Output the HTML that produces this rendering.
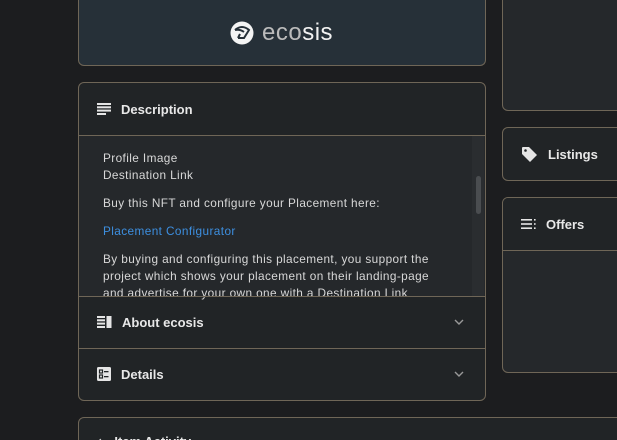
<!DOCTYPE html>
<html><head><style>
*{box-sizing:border-box;margin:0;padding:0}
html,body{width:617px;height:440px;overflow:hidden}
body{background:#1c1d1f;font-family:"Liberation Sans",sans-serif;color:#e5e5e5;position:relative}
.card{position:absolute;border:1px solid #6f6657;border-radius:6px;overflow:hidden;background:#212426}
.hdr{position:absolute;left:0;right:0;height:52px;display:flex;align-items:center;padding-left:18px;font-weight:bold;font-size:13px;color:#e8e8e8}
.hdr svg{margin-right:10px}
.sep{position:absolute;left:0;right:0;height:1px;background:#6f6657}
.txt{position:absolute;left:24px;font-size:11.8px;color:#d8d8d8;line-height:17px;letter-spacing:0.4px;white-space:nowrap}
.hdr svg.chev{position:absolute;right:21px;margin:0}
</style></head><body>
<div class="card" style="left:78px;top:-10px;width:408px;height:76px;background:#263038;border-top:none">
  <svg style="position:absolute;left:151px;top:31px" width="24" height="24" viewBox="0 0 24 24"><circle cx="12" cy="12" r="11.5" fill="#f4f4f4"/><path d="M5 9 Q12 3 19 9 L14 17 L8 17 M5 9 Q10 8 14 11 M8 17 L10 13" stroke="#263038" stroke-width="2" fill="none"/></svg>
  <div style="position:absolute;left:183px;top:29px;font-size:24px;color:#f2f2f2;letter-spacing:0.5px"><span style="color:#bbb">eco</span><span>sis</span></div>
</div>

<div class="card" style="left:78px;top:82px;width:408px;height:319px">
  <div class="hdr" style="top:0">
    <svg width="14" height="12" viewBox="0 0 14 12"><rect x="0" y="0" width="14" height="2" fill="#e5e5e5"/><rect x="0" y="3.3" width="14" height="2" fill="#e5e5e5"/><rect x="0" y="6.6" width="14" height="2" fill="#e5e5e5"/><rect x="0" y="10" width="9" height="2" fill="#e5e5e5"/></svg>Description</div>
  <div class="sep" style="top:52px"></div>
  <div style="position:absolute;top:53px;left:0;right:0;height:160px;background:#25282b">
    <div class="txt" style="top:14px">Profile Image<br>Destination Link</div>
    <div class="txt" style="top:59px">Buy this NFT and configure your Placement here:</div>
    <div class="txt" style="top:87px;color:#3d8fe0">Placement Configurator</div>
    <div class="txt" style="top:115px">By buying and configuring this placement, you support the<br>project which shows your placement on their landing-page<br>and advertise for your own one with a Destination Link</div>
    <div style="position:absolute;right:1px;top:0;width:12px;height:160px;background:#2a2d30"></div>
    <div style="position:absolute;right:4px;top:40px;width:5px;height:38px;border-radius:3px;background:#4a4d50"></div>
  </div>
  <div class="sep" style="top:213px"></div>
  <div class="hdr" style="top:213px">
    <svg width="15" height="12" viewBox="0 0 15 12"><rect x="0" y="0" width="8" height="2" fill="#e5e5e5"/><rect x="0" y="3.3" width="8" height="2" fill="#e5e5e5"/><rect x="0" y="6.6" width="8" height="2" fill="#e5e5e5"/><rect x="0" y="10" width="8" height="2" fill="#e5e5e5"/><rect x="9.5" y="0" width="5" height="12" fill="#e5e5e5"/></svg>About ecosis
    <svg class="chev" width="10" height="6" viewBox="0 0 10 6"><path d="M1 1 L5 5 L9 1" stroke="#999" stroke-width="1.4" fill="none"/></svg></div>
  <div class="sep" style="top:265px"></div>
  <div class="hdr" style="top:265px">
    <svg width="14" height="14" viewBox="0 0 14 14"><rect width="14" height="14" rx="1.5" fill="#e5e5e5"/><rect x="2.5" y="3" width="3" height="3" fill="none" stroke="#212426" stroke-width="1.2"/><rect x="2.5" y="8" width="3" height="3" fill="none" stroke="#212426" stroke-width="1.2"/><rect x="7" y="4" width="4.5" height="1.3" fill="#212426"/><rect x="7" y="9" width="4.5" height="1.3" fill="#212426"/></svg>Details
    <svg class="chev" width="10" height="6" viewBox="0 0 10 6"><path d="M1 1 L5 5 L9 1" stroke="#999" stroke-width="1.4" fill="none"/></svg></div>
</div>

<div class="card" style="left:78px;top:417px;width:560px;height:40px">
  <div style="position:absolute;left:18px;top:16px;font-size:13px;font-weight:bold;color:#e8e8e8">&#8597;&nbsp;&nbsp;&nbsp;Item Activity</div>
</div>

<div class="card" style="left:502px;top:-10px;width:140px;height:121px;background:#25282b;border-top:none"></div>
<div class="card" style="left:502px;top:127px;width:140px;height:54px">
  <div class="hdr" style="top:0;height:52px">
    <svg width="17" height="17" viewBox="0 0 17 17"><path d="M1 2 Q1 1 2 1 L8 1 L16 9 L9 16 L1 8 Z" fill="#e5e5e5"/><circle cx="4.5" cy="4.5" r="1.3" fill="#212426"/></svg>Listings</div>
</div>
<div class="card" style="left:502px;top:197px;width:140px;height:176px;background:#25282b">
  <div class="hdr" style="top:0;background:#212426">
    <svg width="15" height="10" viewBox="0 0 15 10"><rect x="0" y="0" width="11" height="1.6" fill="#e5e5e5"/><rect x="0" y="4.2" width="11" height="1.6" fill="#e5e5e5"/><rect x="0" y="8.4" width="11" height="1.6" fill="#e5e5e5"/><rect x="13" y="0" width="1.6" height="1.6" fill="#e5e5e5"/><rect x="13" y="4.2" width="1.6" height="1.6" fill="#e5e5e5"/><rect x="13" y="8.4" width="1.6" height="1.6" fill="#e5e5e5"/></svg>Offers</div>
  <div class="sep" style="top:52px"></div>
</div>
</body></html>
